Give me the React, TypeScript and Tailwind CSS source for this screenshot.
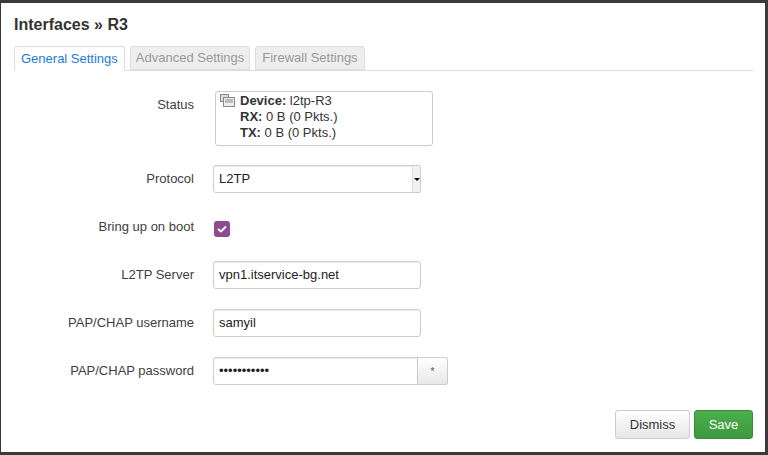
export default function App() {
  const font = { fontFamily: '"Liberation Sans", Arial, sans-serif' };
  const label = "w-[180px] text-right text-[13px] text-[#404040]";
  const input = "h-[28px] rounded-[3px] border border-[#ccc] bg-white px-[5px] text-[13px] text-[#222] flex items-center shadow-[inset_0_1px_1px_rgba(0,0,0,0.08)]";
  return (
    <div className="w-[768px] h-[455px] bg-[#3a3a3a] pt-[3px] pl-[1px]" style={font}>
      <div className="w-[764px] h-[449px] bg-white flex flex-col pl-[13px] pr-[12px] relative">
        <div className="text-[16px] font-bold text-[#333] mt-[10px] h-[22px]">Interfaces » R3</div>
        <div className="flex items-end gap-[5px] mt-[11px] border-b border-[#ddd] h-[25px]">
          <div className="h-[25px] px-[6px] flex items-center border border-[#ddd] border-b-white -mb-px bg-white rounded-t-[3px] text-[13px] text-[#1e7bd6]">General Settings</div>
          <div className="h-[24px] px-[5px] flex items-center border border-[#ddd] bg-[#eee] rounded-t-[3px] text-[13px] text-[#999]">Advanced Settings</div>
          <div className="h-[24px] px-[6px] flex items-center border border-[#ddd] bg-[#eee] rounded-t-[3px] text-[13px] text-[#999]">Firewall Settings</div>
        </div>
        <div className="flex mt-[20px]">
          <div className={label + " pt-[4px]"}>Status</div>
          <div className="ml-[21px] w-[218px] h-[55px] border border-[#ccc] rounded-[3px] px-[4px] pt-[1px] flex gap-[4px] text-[13px] leading-[16px] text-[#333]">
            <svg width="16" height="14" viewBox="0 0 16 14" className="mt-[1px]">
              <rect x="0.5" y="0.5" width="8" height="7" fill="#ddd" stroke="#888" />
              <rect x="3.5" y="3.5" width="11" height="9" fill="#eee" stroke="#888" />
              <rect x="5" y="5" width="8" height="4" fill="#bbb" />
            </svg>
            <div>
              <div><b>Device:</b> l2tp-R3</div>
              <div><b>RX:</b> 0 B (0 Pkts.)</div>
              <div><b>TX:</b> 0 B (0 Pkts.)</div>
            </div>
          </div>
        </div>
        <div className="flex items-center mt-[19px]">
          <div className={label}>Protocol</div>
          <div className={input + " ml-[19px] w-[208px] justify-between pr-0 rounded-r-[2px]"}>
            <span>L2TP</span>
            <div className="w-[8px] h-full border-l border-[#ddd] bg-[#f2f2f2] flex items-center justify-center">
              <div className="w-0 h-0 border-l-[3px] border-r-[3px] border-t-[3px] border-l-transparent border-r-transparent border-t-black" />
            </div>
          </div>
        </div>
        <div className="flex items-center mt-[24px]">
          <div className={label}>Bring up on boot</div>
          <div className="ml-[20px] w-[16px] h-[16px] rounded-[3px] bg-[#8e4b8f] flex items-center justify-center mt-[4px]">
            <svg width="10" height="8" viewBox="0 0 10 8"><path d="M1 4 L4 6.5 L9 1.5" stroke="white" strokeWidth="1.8" fill="none" /></svg>
          </div>
        </div>
        <div className="flex items-center mt-[24px]">
          <div className={label}>L2TP Server</div>
          <div className={input + " ml-[19px] w-[208px]"}>vpn1.itservice-bg.net</div>
        </div>
        <div className="flex items-center mt-[20px]">
          <div className={label}>PAP/CHAP username</div>
          <div className={input + " ml-[19px] w-[208px]"}>samyil</div>
        </div>
        <div className="flex items-center mt-[20px]">
          <div className={label}>PAP/CHAP password</div>
          <div className={input + " ml-[19px] w-[205px] rounded-r-none"}>•••••••••••</div>
          <div className="h-[28px] w-[30px] border border-l-0 border-[#ccc] rounded-r-[3px] bg-gradient-to-b from-white to-[#e8e8e8] flex items-center justify-center text-[10px] text-[#555]">*</div>
        </div>
        <div className="flex justify-end gap-[4px] mt-[25px]">
          <div className="h-[29px] w-[75px] border border-[#ccc] rounded-[3px] bg-gradient-to-b from-white to-[#e6e6e6] flex items-center justify-center text-[13px] text-[#333]">Dismiss</div>
          <div className="h-[29px] w-[59px] border border-[#3a8c3a] rounded-[3px] bg-gradient-to-b from-[#4cae4c] to-[#3c9a3c] flex items-center justify-center text-[13px] text-white">Save</div>
        </div>
      </div>
    </div>
  );
}
